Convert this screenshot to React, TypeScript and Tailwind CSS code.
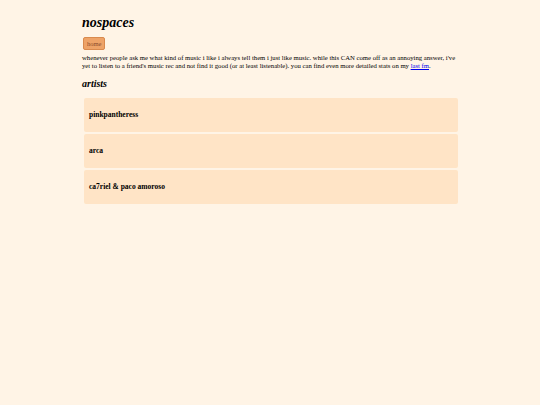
const artists = ['pinkpantheress', 'arca', 'ca7riel & paco amoroso'];

export default function App() {
  return (
    <div className="min-h-[405px] bg-[#fff4e6] font-['Liberation_Serif',serif] text-black">
      <div className="mx-auto w-[376px] pt-[14px]">
        <h1 className="text-[14px] leading-[18px] font-bold italic">nospaces</h1>
        <div className="mt-[5px] mb-[4px] ml-[1px] flex">
          <button className="rounded-[2px] border border-[#d98a4e] bg-[#eea368] px-[3px] text-[6.5px] leading-[11px] text-[#8b4a2b]">
            home
          </button>
        </div>
        <p className="text-[6.7px] leading-[8px]">
          whenever people ask me what kind of music i like i always tell them i just like music. while this CAN come off as an annoying answer, i've yet to listen to a friend's music rec and not find it good (or at least listenable). you can find even more detailed stats on my{' '}
          <a href="#" className="text-[#0000ee] underline">last fm</a>.
        </p>
        <h2 className="mt-[8px] text-[10px] leading-[12px] font-bold italic">artists</h2>
        <div className="mt-[8px] ml-[2px] flex flex-col gap-[2px]">
          {artists.map((a) => (
            <div key={a} className="flex h-[34px] items-center rounded-[2px] bg-[#ffe4c6] px-[5px] text-[7.5px] font-bold">
              {a}
            </div>
          ))}
        </div>
      </div>
    </div>
  );
}
